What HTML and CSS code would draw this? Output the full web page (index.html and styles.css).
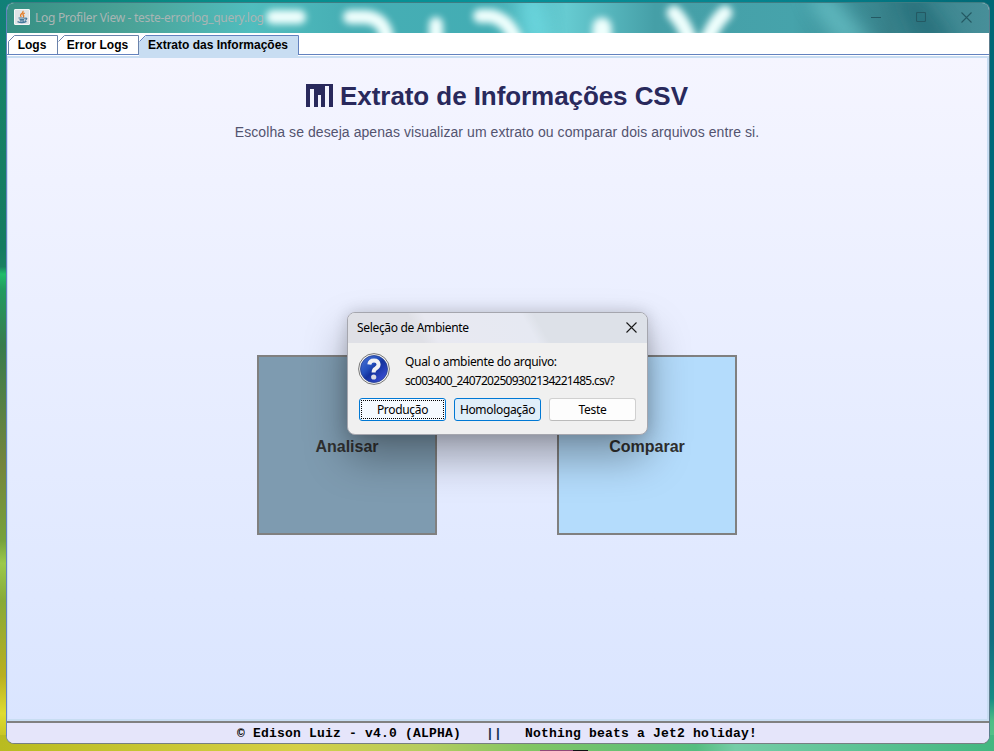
FILE: index.html
```html
<!DOCTYPE html>
<html lang="pt-BR">
<head>
<meta charset="utf-8">
<title>Log Profiler View</title>
<link rel="stylesheet" href="styles.css">
</head>
<body>
<svg class="wallpaper" width="994" height="751" aria-hidden="true">
  <defs>
    <linearGradient id="leftEdge" x2="0" y2="1"><stop offset="0" stop-color="#108078"/><stop offset=".12" stop-color="#168267"/><stop offset=".33" stop-color="#147b60"/><stop offset=".355" stop-color="#1a8060"/><stop offset=".365" stop-color="#20bd6a"/><stop offset=".385" stop-color="#219b60"/><stop offset=".46" stop-color="#387c4c"/><stop offset=".62" stop-color="#74853c"/><stop offset=".72" stop-color="#76a23c"/><stop offset=".75" stop-color="#9bc94b"/><stop offset=".8" stop-color="#87aa38"/><stop offset=".9" stop-color="#b9af20"/><stop offset=".95" stop-color="#dedc30"/><stop offset="1" stop-color="#b9b61e"/></linearGradient>
    <linearGradient id="rightEdge" x2="0" y2="1"><stop offset="0" stop-color="#006875"/><stop offset=".6" stop-color="#006a83"/><stop offset=".85" stop-color="#126d80"/><stop offset=".93" stop-color="#168c84"/><stop offset=".96" stop-color="#4fbd86"/><stop offset="1" stop-color="#5bc58b"/></linearGradient>
    <linearGradient id="bottomEdge"><stop offset="0" stop-color="#b9bb20"/><stop offset=".3" stop-color="#d5cf46"/><stop offset=".43" stop-color="#b4cc60"/><stop offset=".53" stop-color="#82c563"/><stop offset=".7" stop-color="#55bd80"/><stop offset=".74" stop-color="#75cda7"/><stop offset="1" stop-color="#43b780"/></linearGradient>
    <linearGradient id="topEdge"><stop offset="0" stop-color="#088374"/><stop offset=".25" stop-color="#078d8b"/><stop offset=".5" stop-color="#079299"/><stop offset=".8" stop-color="#04818c"/><stop offset="1" stop-color="#006875"/></linearGradient>
  </defs>
  <rect width="994" height="12" fill="url(#topEdge)"/>
  <rect width="12" height="751" fill="url(#leftEdge)"/>
  <rect x="982" width="12" height="751" fill="url(#rightEdge)"/>
  <rect y="735" width="994" height="16" fill="url(#bottomEdge)"/>
  <path d="M540 750h33v1h-33z" fill="#914878"/><path d="M573 750h15v1h-15z" fill="#101014"/>
</svg>
<div class="window">
  <header class="titlebar">
    <svg class="glow" width="982" height="30" viewBox="7 3 982 30" aria-hidden="true">
      <defs>
        <filter id="soft" x="-50%" y="-80%" width="200%" height="260%" color-interpolation-filters="sRGB"><feGaussianBlur stdDeviation="3.5"/></filter>
        <filter id="haze" x="-50%" y="-80%" width="200%" height="260%"><feGaussianBlur stdDeviation="9"/></filter>
      </defs>
      <path d="M518-5h22l12 50h-26z" fill="#78e5ee" opacity=".6" filter="url(#haze)"/>
      <path d="M805-5h26l45 50h-38z" fill="#75ced3" opacity=".6" filter="url(#haze)"/>
      <path d="M895-5h26l38 50h-42z" fill="#12606d" opacity=".5" filter="url(#haze)"/>
      <g fill="none" stroke="#effffd" stroke-width="14" stroke-linecap="round" filter="url(#soft)">
        <path d="M273 17h26"/>
        <path d="M350 17h16q20 2 21 24"/>
        <path d="M436 24v18" stroke-width="14"/>
        <path d="M480 16h11q18 4 25 25"/>
        <path d="M602 27v16" stroke-width="19"/>
        <path d="M674 13q10 10 16 28M725 13q-11 10-18 28" stroke-width="15"/>
      </g>
    </svg>
    <svg class="app-icon" width="16" height="16" viewBox="0 0 16 16">
      <rect x=".5" y=".5" width="15" height="15" rx=".5" fill="#e0e4e7" stroke="#f7f7f7"/>
      <path d="M8.700 2q1 1.300-1 2.600T7.300 8M10.700 4q-3 1.600-1 2.800Q10 7.600 9 8.400" fill="none" stroke="#e37b26" stroke-width="1.300"/>
      <path d="M4.500 9h6M5.500 10.700h4.700M6 12h4M3.500 12.600q4.500 2 9-.2M10.500 9.400q3-.8 2 .9-.5.800-1.700 1" fill="none" stroke="#44789c" stroke-width="1.200"/>
    </svg>
    <span class="window-title">Log Profiler View - teste-errorlog_query.log</span>
    <div class="window-controls">
      <svg width="10" height="11"><path d="M0 5.500h10"/></svg>
      <svg width="10" height="11"><rect x=".5" y=".5" width="9" height="9" rx="1"/></svg>
      <svg width="11" height="11"><path d="M.5.500l10 10M10.500.5l-10 10"/></svg>
    </div>
  </header>
  <nav class="tabs">
    <div class="tab tab-logs"><svg width="50" height="19"><path d="M.5 19V6.500L6.500.5H49.500V19" /></svg><span>Logs</span></div>
    <div class="tab tab-errors"><svg width="81" height="19"><path d="M.5 6.500L6.500.5H80.500V19" /></svg><span>Error Logs</span></div>
    <div class="tab tab-extract"><svg width="160" height="21"><path class="selected-fill" d="M0 21V7L7 1H159V21z"/><path class="selected-line" d="M.5 6.500L6.500.5H159.500V19.500"/></svg><span>Extrato das Informações</span></div>
  </nav>
  <main class="content">
    <h1><svg width="27" height="23" viewBox="0 0 27 23"><path d="M0 0H27V23H23V2H19V23H15V11H12V23H8V5H4V23H0Z" fill="#29295c"/></svg><span>Extrato de Informações CSV</span></h1>
    <p class="subtitle">Escolha se deseja apenas visualizar um extrato ou comparar dois arquivos entre si.</p>
    <div class="cards">
      <div class="card analyze">Analisar</div>
      <div class="card compare">Comparar</div>
    </div>
  </main>
  <footer class="status"><span class="author">© Edison Luiz - v4.0 (ALPHA)</span><span class="bars">||</span><span class="slogan">Nothing beats a Jet2 holiday!</span></footer>
</div>
<section class="dialog" role="dialog">
  <div class="dialog-title"><span class="dialog-name">Seleção de Ambiente</span><svg width="11" height="11"><path d="M.5.500l10 10M10.500.5l-10 10" fill="none" stroke="#191919" stroke-width="1.100"/></svg></div>
  <div class="message">
    <svg width="32" height="32" viewBox="0 0 32 32">
      <defs><linearGradient id="blue" x2="1" y2="1"><stop offset="0" stop-color="#4c75d8"/><stop offset=".38" stop-color="#2450bd"/><stop offset=".52" stop-color="#14329d"/><stop offset="1" stop-color="#4657e5"/></linearGradient></defs>
      <circle cx="16" cy="16" r="15.400" fill="#f2f2f2" stroke="#777" stroke-width="1"/>
      <circle cx="16" cy="16" r="13.500" fill="url(#blue)" stroke="#233e8f" stroke-width=".8"/>
      <path d="M11.300 11.500Q11.800 7.500 16 7.500t4.600 3.800Q20.500 13.800 17.800 15.500q-2.200 1.200-2.200 4" fill="none" stroke="#f1f1f4" stroke-width="4"/>
      <circle cx="15.700" cy="24" r="2.600" fill="#dcdce4"/>
    </svg>
    <p><span class="question">Qual o ambiente do arquivo:</span><span class="filename">sc003400_2407202509302134221485.csv?</span></p>
  </div>
  <div class="actions"><button class="default"><span>Produção</span></button><button class="hover"><span>Homologação</span></button><button><span>Teste</span></button></div>
</section>
</body>
</html>
```
FILE: styles.css
```css
* { box-sizing: border-box; }
body { margin: 0; width: 994px; height: 751px; padding: 2px 4px 7px 6px; overflow: hidden; position: relative; font-family: "Noto Sans", sans-serif; }
.wallpaper { position: absolute; inset: 0; z-index: -1; }
.window { width: 984px; height: 742px; border: 1px solid #777f82; border-top-color: #3e7d83; border-left-color: #6382bf; border-right-color: #5c7c8c; border-radius: 8px; overflow: hidden; display: flex; flex-direction: column; background: white; }
.titlebar { height: 30px; flex: none; display: flex; align-items: center; position: relative; margin-left: -1px; padding-left: 8px; background: linear-gradient(90deg, #368f83 0, #4ba398 13%, #50bdbe 25%, #46aeb4 35%, #43adb4 49%, #66cbd1 57%, #459fa7 66%, #46a3ab 80%, #378089 90%, #478f99 100%); }
.glow { position: absolute; left: 1px; top: 0; }
.app-icon { position: relative; margin-right: 5px; margin-top: -2px; }
.window-title { position: relative; top: -1px; color: #a9b5b4; font-size: 12px; letter-spacing: -.29px; white-space: nowrap; }
.window-controls { position: relative; margin-left: auto; margin-right: 17px; margin-top: -2px; display: flex; gap: 35px; }
.window-controls svg { fill: none; stroke: #245963; stroke-width: 1.100; }
.tabs { height: 22px; flex: none; padding: 2px 0 0 2px; background: white; display: flex; border-bottom: 1px solid #6382bf; font: bold 12px/18px "Liberation Sans", sans-serif; color: #000; margin-left: -1px; }
.tab { height: 19px; position: relative; display: flex; justify-content: center; flex: none; }
.tab svg { position: absolute; left: 0; top: 0; fill: none; stroke: #6b83ab; }
.tab span { position: relative; white-space: nowrap; top: 1px; }
.tab-logs { width: 50px; }.tab-errors { width: 81px; }.tab-extract { width: 160px; }
.tab span { left: -1px; }
.tab .selected-fill { fill: #c8ddf2; stroke: none; }
.tab .selected-line { stroke: #6382bf; }
.content { height: 665px; flex: none; display: flex; flex-direction: column; align-items: center; margin-top: 1px; padding-top: 21px; border: solid #c8ddf2; border-width: 2px 2px 2px 1px; background: linear-gradient(#f5f5ff, #dae5ff); }
h1 { margin: 0 0 0 -1px; height: 33px; display: flex; align-items: center; gap: 7px; font: bold 26px/30px "Liberation Sans", sans-serif; letter-spacing: -.07px; color: #29295c; white-space: nowrap; }
h1 svg { margin-top: -1px; }
.subtitle { margin: 11px 0 0 -1px; font: 14px/18px "Liberation Sans", sans-serif; letter-spacing: .075px; color: #53536f; white-space: nowrap; }
.cards { display: flex; gap: 120px; margin: 214px 0 0 -1px; }
.card { width: 180px; height: 180px; padding-top: 4px; border: 2px solid #808080; display: flex; align-items: center; justify-content: center; color: #303030; font: bold 16px/20px "Liberation Sans", sans-serif; }
.analyze { background: #7e9bb0; }.compare { background: #b4dcfc; }
.status { height: 22px; flex: none; border-top: 2px solid #808080; background: #e5e5fa; display: flex; align-items: center; padding-left: 230px; color: #000; font: bold 13px/18px "Liberation Mono", monospace; letter-spacing: .2px; white-space: pre; }
.status span { position: relative; top: 1px; }
.bars { width: 39px; margin-left: 25px; color: #16334f; }
.dialog { position: absolute; left: 347px; top: 312px; width: 301px; height: 123px; border: 1px solid #a5a6ae; border-radius: 8px; overflow: hidden; background: #f0f0f0; box-shadow: 0 22px 42px rgba(0,0,0,.34), 0 0 15px rgba(0,0,0,.16); color: #000; }
.dialog-title { height: 30px; display: flex; align-items: center; justify-content: space-between; padding: 0 10px 0 9px; background: linear-gradient(60deg, #dfe0e6 0 24%, #e8e9f1 29%, #e6e9f2 60%, #dde1e8 64% 100%); font-size: 12px; }
.dialog-title svg { margin-top: -2px; }
.dialog-name { position: relative; top: -1px; }
.message { height: 55px; display: flex; padding: 10px 0 0 10px; }
.message p { margin: -1px 0 0 15px; font-size: 12px; line-height: 19px; white-space: nowrap; }
.message p span { display: block; }
.actions { display: flex; gap: 8px; padding-left: 11px; }
button { width: 87px; height: 23px; border: 1px solid #d0d0d0; border-bottom-color: #bbb; border-radius: 3px; padding: 0; background: #fdfdfd; color: #000; font: 12px/19px "Noto Sans", sans-serif; }
button.default { border-color: #0078d4; background: #f5faff; position: relative; }
button.default::after { content: ""; position: absolute; inset: 1px; border: 1px dotted black; }
button.hover { border-color: #0078d4; background: #e0eef9; }
.dialog-name, .question, button span { letter-spacing: -.33px; }
.message .filename { letter-spacing: -.73px; }
```
